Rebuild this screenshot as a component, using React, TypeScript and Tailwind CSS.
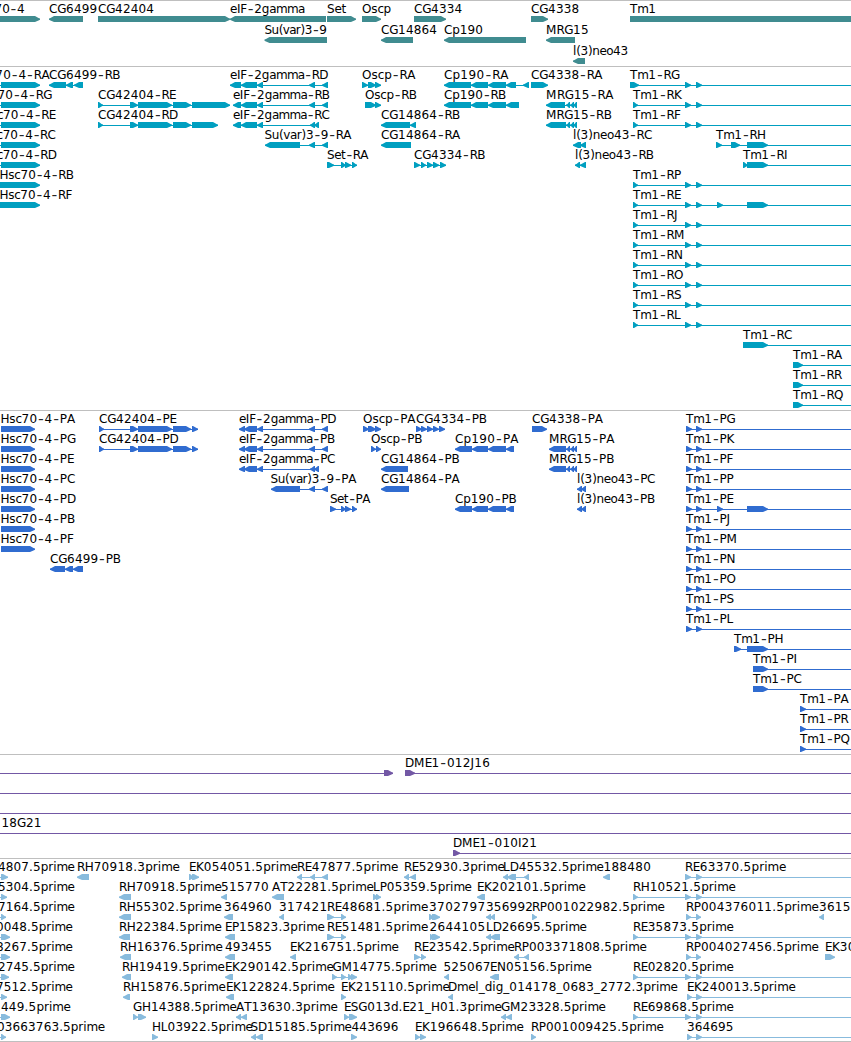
type Dir = "r" | "l";
type Span = [number, number];

interface Feature {
  text: string;
  x: number;
  dir: Dir;
  exons: Span[];
  lineTo?: number;
  textEnd?: number;
}

type Row = Feature[];

const EDGE = 860;

const ADVANCE: Record<string, number> = {
  "-": 7.4, ".": 3.9, "(": 4.3, ")": 4.5, _: 6, " ": 4,
  A: 8.1, B: 7.4, C: 8.2, D: 8.9, E: 6.8, F: 6.7, G: 8.9, H: 8.8, I: 3.4, J: 3.8, K: 7.8, L: 6.7,
  M: 10.6, N: 9, O: 9.3, P: 7.1, Q: 9.3, R: 7.6, S: 7.4, T: 7.2,
  a: 6.8, c: 6.2, d: 7.5, e: 7, g: 7.5, i: 3.4, l: 3.4, m: 11.1, n: 7.5, o: 7.2, p: 7.5, r: 4.9,
  s: 6.1, t: 4.7, u: 7.5, v: 6.9,
};

const advanceOf = (ch: string) => ADVANCE[ch] ?? 7.8;

interface Run {
  chars: string;
  xs: number[];
  hyphen: boolean;
}

/* Splits a label into runs of plain characters and wide hyphens, each with its glyph positions. */
function layoutLabel(text: string, x: number, end?: number): Run[] {
  const chars = [...text];
  const total = chars.reduce((sum, ch) => sum + advanceOf(ch), 0);
  const scale = end === undefined ? 1 : (end + 0.6 - x) / total;
  const runs: Run[] = [];
  let at = x;
  for (const ch of chars) {
    const hyphen = ch === "-";
    const last = runs[runs.length - 1];
    const here = hyphen ? at + 0.8 : at;
    if (last && last.hyphen === hyphen) {
      last.chars += ch;
      last.xs.push(here);
    } else {
      runs.push({ chars: ch, xs: [here], hyphen });
    }
    at += advanceOf(ch) * scale;
  }
  return runs;
}

const f = (text: string, x: number, dir: Dir, exons: Span[], lineTo?: number, textEnd?: number): Feature => ({
  text, x, dir, exons, lineTo, textEnd,
});

/* ---------- genes ---------- */
const genes: Row[] = [
  [
    f("Hsc70-4", -26, "r", [[-10, 40]], undefined, 24),
    f("CG6499", 49, "l", [[49, 83]]),
    f("CG42404", 98, "r", [[98, 230]]),
    f("eIF-2gamma", 230, "l", [[230, 326]], undefined, 304),
    f("Set", 327, "r", [[327, 356]]),
    f("Oscp", 362, "r", [[362, 381]]),
    f("CG4334", 414, "r", [[414, 446]]),
    f("CG4338", 531, "r", [[531, 548]]),
    f("Tm1", 630, "r", [[630, EDGE]]),
  ],
  [
    f("Su(var)3-9", 264.5, "l", [[264.5, 327]], undefined, 326),
    f("CG14864", 381, "l", [[381, 413]]),
    f("Cp190", 444, "l", [[444, 526]]),
    f("MRG15", 546, "l", [[546, 575]]),
  ],
  [f("l(3)neo43", 573, "l", [[573, 585]], undefined, 627.5)],
];

/* ---------- transcripts ---------- */
const hscR = (iso: string, x: number, end: number, from = 1) =>
  f("Hsc70-4-" + iso, x, "r", from ? [[-20, -10], [from, 40]] : [[-5, 40]], undefined, end);
const tm = (iso: string, first: Span = [633, 638]) =>
  f("Tm1-" + iso, first[0], "r", [first, [685, 691], [696, 702]], EDGE);
const mrgTail: Span[] = [[566, 570], [570, 574], [573, 577]];

const transcripts: Row[] = [
  [
    hscR("RA", -26, 49),
    f("CG6499-RB", 49, "l", [[49, 66], [66, 73], [74, 83]]),
    f("eIF-2gamma-RD", 230, "l", [[230, 241], [241, 257], [257, 263], [309, 315], [322, 328]], undefined, 327.5),
    f("Oscp-RA", 362, "r", [[362, 368], [368, 376], [375, 381]], undefined, 415),
    f("Cp190-RA", 444, "l", [[444, 471], [471, 488], [488, 506], [506, 516], [523, 529]], undefined, 508),
    f("CG4338-RA", 531, "r", [[531, 548]]),
    tm("RG", [630, 639]),
  ],
  [
    hscR("RG", -23.5, 51.5),
    f("CG42404-RE", 98, "r", [[98, 103], [130, 138], [138, 172], [173, 191], [192, 230]]),
    f("eIF-2gamma-RB", 233, "l", [[233, 241], [241, 257], [257, 263], [309, 315], [322, 328]], undefined, 328.5),
    f("Oscp-RB", 365, "r", [[365, 376], [375, 381]], undefined, 415.5),
    f("Cp190-RB", 444, "l", [[444, 471], [471, 488], [488, 506], [506, 519]]),
    f("MRG15-RA", 546, "l", [[546, 565], ...mrgTail], undefined, 613),
    tm("RK"),
  ],
  [
    hscR("RE", -18, 55),
    f("CG42404-RD", 98, "r", [[98, 103], [130, 138], [138, 172], [173, 191], [192, 218]]),
    f("eIF-2gamma-RC", 233, "l", [[233, 241], [241, 257], [257, 263], [310, 315], [314, 319]], undefined, 329),
    f("CG14864-RB", 381, "l", [[381, 410], [410, 416]]),
    f("MRG15-RB", 546, "l", [[546, 566], ...mrgTail]),
    tm("RF"),
  ],
  [
    hscR("RC", -18, 55),
    f("Su(var)3-9-RA", 264.5, "l", [[265, 300], [309, 315], [322, 328]], undefined, 350.5),
    f("CG14864-RA", 381, "l", [[381, 411]]),
    f("l(3)neo43-RC", 573, "l", [[573, 581], [580, 586]], undefined, 651.5),
    f("Tm1-RH", 716, "r", [[716, 722], [731, 740], [747, 768]], EDGE),
  ],
  [
    hscR("RD", -18, 56),
    f("Set-RA", 327, "r", [[327, 334], [341, 346], [345, 351], [352, 357]], undefined, 367.5),
    f("CG4334-RB", 414, "r", [[414, 420], [421, 426], [427, 433], [433, 439], [440, 446]]),
    f("l(3)neo43-RB", 575, "l", [[575, 580], [580, 586]], undefined, 652.5),
    f("Tm1-RI", 743, "r", [[743, 748], [747, 768]], EDGE),
  ],
  [hscR("RB", -0.5, 72.5, 0), tm("RP")],
  [
    hscR("RF", -0.5, 71.5, 0),
    f("Tm1-RE", 633, "r", [[633, 638], [685, 691], [696, 702], [717, 723], [747, 768]], EDGE),
  ],
  [tm("RJ")],
  [tm("RM")],
  [tm("RN")],
  [tm("RO")],
  [tm("RS")],
  [tm("RL")],
  [f("Tm1-RC", 743, "r", [[743, 768]], EDGE)],
  [f("Tm1-RA", 793, "r", [[793, 803]], EDGE)],
  [f("Tm1-RR", 793, "r", [[793, 803]], EDGE)],
  [f("Tm1-RQ", 793, "r", [[793, 803]], EDGE)],
];

/* ---------- proteins ---------- */
const hscP = (iso: string) => f("Hsc70-4-" + iso, 0.5, "r", [[1, 35]]);
const tmP = (iso: string) => f("Tm1-" + iso, 686, "r", [[686, 692], [696, 702]], EDGE);
const cgP: Span[] = [[99, 104], [130, 138], [138, 172], [173, 191], [192, 198]];
const eifP: Span[] = [[239, 245], [244, 257], [257, 263]];
const cpP: Span[] = [[455, 472], [472, 488], [488, 506], [506, 514]];

const proteins: Row[] = [
  [
    hscP("PA"),
    f("CG42404-PE", 99, "r", cgP),
    f("eIF-2gamma-PD", 239, "l", [...eifP, [309, 315], [322, 328]], undefined, 335.5),
    f("Oscp-PA", 363, "r", [[363, 369], [368, 376], [375, 381]], undefined, 415),
    f("CG4334-PB", 416, "r", [[416, 422], [421, 427], [427, 433], [433, 439], [439, 445]]),
    f("CG4338-PA", 532, "r", [[532, 547]]),
    tmP("PG"),
  ],
  [
    hscP("PG"),
    f("CG42404-PD", 99, "r", cgP),
    f("eIF-2gamma-PB", 239, "l", [...eifP, [309, 315], [322, 328]], undefined, 333.5),
    f("Oscp-PB", 371, "r", [[371, 376], [376, 381]], undefined, 421),
    f("Cp190-PA", 455, "l", cpP, undefined, 518),
    f("MRG15-PA", 549, "l", [[549, 566], ...mrgTail]),
    tmP("PK"),
  ],
  [
    hscP("PE"),
    f("eIF-2gamma-PC", 239, "l", [...eifP, [310, 315], [314, 319]], undefined, 334.5),
    f("CG14864-PB", 381, "l", [[381, 408]]),
    f("MRG15-PB", 549, "l", [[549, 566], ...mrgTail]),
    tmP("PF"),
  ],
  [
    hscP("PC"),
    f("Su(var)3-9-PA", 270.5, "l", [[271, 300], [309, 315], [322, 328]], undefined, 355.5),
    f("CG14864-PA", 381, "l", [[381, 409]]),
    f("l(3)neo43-PC", 577, "l", [[577, 582], [581, 586]], undefined, 654.5),
    tmP("PP"),
  ],
  [
    hscP("PD"),
    f("Set-PA", 330, "r", [[330, 336], [341, 346], [345, 351], [352, 357]], undefined, 369.5),
    f("Cp190-PB", 455, "l", cpP),
    f("l(3)neo43-PB", 577, "l", [[577, 582], [581, 586]], undefined, 653.5),
    f("Tm1-PE", 686, "r", [[686, 692], [696, 702], [717, 723], [747, 768]], EDGE),
  ],
  [hscP("PB"), tmP("PJ")],
  [hscP("PF"), tmP("PM")],
  [f("CG6499-PB", 50, "l", [[50, 65], [65, 73], [73, 83]]), tmP("PN")],
  [tmP("PO")],
  [tmP("PS")],
  [tmP("PL")],
  [f("Tm1-PH", 734, "r", [[734, 741], [747, 768]], EDGE)],
  [f("Tm1-PI", 753, "r", [[753, 768]], EDGE)],
  [f("Tm1-PC", 753, "r", [[753, 768]], EDGE)],
  [f("Tm1-PA", 800, "r", [[800, 806]], EDGE)],
  [f("Tm1-PR", 800, "r", [[800, 806]], EDGE)],
  [f("Tm1-PQ", 800, "r", [[800, 806]], EDGE)],
];

/* ---------- clones ---------- */
const fullLine = (text = "", x = 0) => f(text, x, "r", [[-20, -10]], EDGE);

const clones: Row[] = [
  [
    f("", 0, "r", [[-20, -10], [384, 393]]),
    f("DME1-012J16", 405, "r", [[405, 415]], EDGE, 489.5),
  ],
  [fullLine()],
  [fullLine()],
  [fullLine("18G21", 1.5)],
  [f("DME1-010I21", 453, "r", [[453, 460]], EDGE, 536.5)],
];

/* ---------- ESTs ---------- */
const p = (text: string, x: number, end: number, dir: Dir, exons: Span[], lineTo?: number) =>
  f(text, x, dir, exons, lineTo, end);
const cut = (text: string, x: number, end: number, tip: number) => p(text, x, end, "r", [[-20, -10], [1, tip]]);
const tmE = (text: string) => p(text, 633, 735, "r", [[633, 638], [685, 691], [696, 702]], EDGE);

const ests: Row[] = [
  [
    cut("4807.5prime", -2, 74, 8),
    p("RH70918.3prime", 77, 179, "l", [[77, 89]]),
    p("EK054051.5prime", 189, 297, "r", [[189, 194], [192, 199]]),
    p("RE47877.5prime", 297, 397.5, "l", [[297, 302], [310, 315], [322, 328]]),
    p("RE52930.3prime", 404, 504, "l", [[404, 409], [410, 416]]),
    p("LD45532.5prime", 503, 603, "l", [[503, 508], [507, 516], [524, 529]]),
    p("188480", 603.5, 650.5, "l", [[603, 610]]),
    p("RE63370.5prime", 685, 785.5, "r", [[685, 691], [696, 702]], EDGE),
  ],
  [
    cut("5304.5prime", -2, 74, 7),
    p("RH70918.5prime", 119, 221, "l", [[119, 131]]),
    p("515770", 221, 268.5, "l", [[221, 227]]),
    p("AT22281.5prime", 272, 373, "l", [[272, 284]]),
    p("LP05359.5prime", 373, 471, "r", [[373, 378], [376, 381]]),
    p("EK202101.5prime", 477, 585, "l", [[477, 485]]),
    tmE("RH10521.5prime"),
  ],
  [
    cut("7164.5prime", -2, 74, 6),
    p("RH55302.5prime", 119, 221, "l", [[119, 131]]),
    p("364960", 224, 271.5, "l", [[224, 233]]),
    p("317421", 279, 327, "l", [[279, 284]]),
    p("RE48681.5prime", 327, 427.5, "r", [[327, 334], [341, 346]]),
    p("3702797", 429, 485, "r", [[429, 434], [432, 440]]),
    p("356992", 486, 532.5, "l", [[486, 491], [490, 495]]),
    p("RP001022982.5prime", 532, 664, "r", [[532, 537]]),
    p("RP004376011.5prime", 686, 818, "r", [[686, 691], [696, 701]]),
    p("3615", 819, 850, "l", [[819, 824]]),
  ],
  [
    cut("0048.5prime", -4, 72, 10),
    p("RH22384.5prime", 119, 221, "l", [[119, 130]]),
    p("EP15823.3prime", 225, 324, "l", [[225, 235]]),
    p("RE51481.5prime", 327, 427.5, "r", [[327, 334], [341, 346]]),
    p("2644105", 429.5, 485, "r", [[430, 434], [432, 440]]),
    p("LD26695.5prime", 486, 586, "l", [[486, 491], [490, 500]]),
    { ...tmE("RE35873.5prime"), textEnd: 733 },
  ],
  [
    cut("8267.5prime", -4, 72, 10),
    p("RH16376.5prime", 120, 222, "l", [[120, 131]]),
    p("493455", 225, 271.5, "l", [[225, 235]]),
    p("EK216751.5prime", 290, 398, "l", [[290, 296]]),
    p("RE23542.5prime", 414, 514, "r", [[414, 420], [421, 426]]),
    p("RP003371808.5prime", 514, 646, "l", [[514, 519], [524, 529]]),
    p("RP004027456.5prime", 686, 818, "r", [[686, 691], [696, 701]]),
    p("EK306", 825, 863, "r", [[825, 835]]),
  ],
  [
    cut("2745.5prime", -2, 74, 9),
    p("RH19419.5prime", 122, 224, "l", [[122, 131]]),
    p("EK290142.5prime", 225, 333, "l", [[225, 233]]),
    p("GM14775.5prime", 332.5, 436, "r", [[332, 337], [341, 346], [348, 353], [351, 357]]),
    p("525067", 443.5, 490, "l", [[444, 449]]),
    p("EN05156.5prime", 490, 591, "l", [[490, 499]]),
    { ...tmE("RE02820.5prime"), textEnd: 733 },
  ],
  [
    cut("7512.5prime", -4, 72, 7),
    p("RH15876.5prime", 123, 225, "l", [[123, 130]]),
    p("EK122824.5prime", 226, 334, "l", [[226, 234]]),
    p("EK215110.5prime", 341, 449, "r", [[341, 346]]),
    p("Dmel_dig_014178_0683_2772.3prime", 448, 677, "l", [[448, 453]]),
    p("EK240013.5prime", 687, 795, "r", [[687, 692], [696, 702]], EDGE),
  ],
  [
    cut("449.5prime", 1, 70, 10),
    p("GH14388.5prime", 133, 236, "r", [[133, 138], [138, 146]]),
    p("AT13630.3prime", 236, 337, "l", [[236, 241], [241, 247]]),
    p("ESG013d.E21_H01.3prime", 344, 501, "r", [[344, 349], [349, 357]]),
    p("GM23328.5prime", 501, 605, "l", [[501, 506], [506, 512]]),
    { ...tmE("RE69868.5prime"), textEnd: 733 },
  ],
  [
    cut("03663763.5prime", -3, 104, 6),
    p("HL03922.5prime", 152, 252, "r", [[152, 158]]),
    p("SD15185.5prime", 250.5, 351, "l", [[251, 256], [256, 263]]),
    p("443696", 351.5, 398, "r", [[351, 357]]),
    p("EK196648.5prime", 415, 523, "r", [[415, 420], [420, 426]]),
    p("RP001009425.5prime", 531, 663, "r", [[531, 536]]),
    p("364695", 687, 733, "r", [[687, 692], [696, 702]], EDGE),
  ],
];

function exonPoints([a, b]: Span, dir: Dir): string {
  const head = Math.min(5, b - a - 1);
  const [back, tip, s] = dir === "r" ? [a, b, 1] : [b, a, -1];
  return [
    `${back},15`,
    `${tip - s * head},15`,
    `${tip - s * 1.5},17`,
    `${tip},17.6`,
    `${tip},18.8`,
    `${tip - s * 1.5},19.4`,
    `${tip - s * head},21`,
    `${back},21`,
  ].join(" ");
}

function FeatureGlyph({ feature }: { feature: Feature }) {
  const { text, x, dir, exons, lineTo, textEnd } = feature;
  const start = exons[0][0];
  const end = lineTo ?? exons[exons.length - 1][1];
  const joined = exons.length > 1 || lineTo !== undefined;
  return (
    <g>
      {joined && <rect x={start} y={18} width={end - start} height={1} shapeRendering="crispEdges" />}
      {exons.map((exon, i) => (
        <polygon key={i} points={exonPoints(exon, dir)} />
      ))}
      {text && (
        <text className="fill-black">
          {layoutLabel(text, x, textEnd).map((run, i) => (
            <tspan
              key={i}
              x={run.xs.map((v) => v.toFixed(2)).join(" ")}
              y={run.hyphen ? 12.9 : 12}
              fontSize={run.hyphen ? 16 : 12}
              fillOpacity={run.hyphen ? 0.85 : 1}
            >
              {run.chars}
            </tspan>
          ))}
        </text>
      )}
    </g>
  );
}

function Track({ rows, color, rowHeight, end }: { rows: Row[]; color: string; rowHeight: string; end: string }) {
  return (
    <section className={`flex flex-col border-t border-[#bfbfbf] ${end} ${color}`}>
      {rows.map((row, i) => (
        <div key={i} className={`w-full ${rowHeight}`}>
          <svg className="block h-full w-full overflow-visible fill-current" fontSize={12}>
            {row.map((feature, j) => (
              <FeatureGlyph key={j} feature={feature} />
            ))}
          </svg>
        </div>
      ))}
    </section>
  );
}

export default function App() {
  return (
    <main className="flex h-[1042px] w-[851px] flex-col overflow-hidden border-b border-[#bfbfbf] bg-white font-['DejaVu_Sans',sans-serif]">
      <Track rows={genes} color="text-[#408c90]" rowHeight="h-[21px]" end="pb-0.5" />
      <Track rows={transcripts} color="text-[#009fc0]" rowHeight="h-5" end="pb-[3px]" />
      <Track rows={proteins} color="text-[#306cd0]" rowHeight="h-5" end="pb-[3px]" />
      <Track rows={clones} color="text-[#7358a5]" rowHeight="h-5" end="pb-[3px]" />
      <Track rows={ests} color="text-[#88bbdd]" rowHeight="h-5" end="pb-0.5" />
    </main>
  );
}
